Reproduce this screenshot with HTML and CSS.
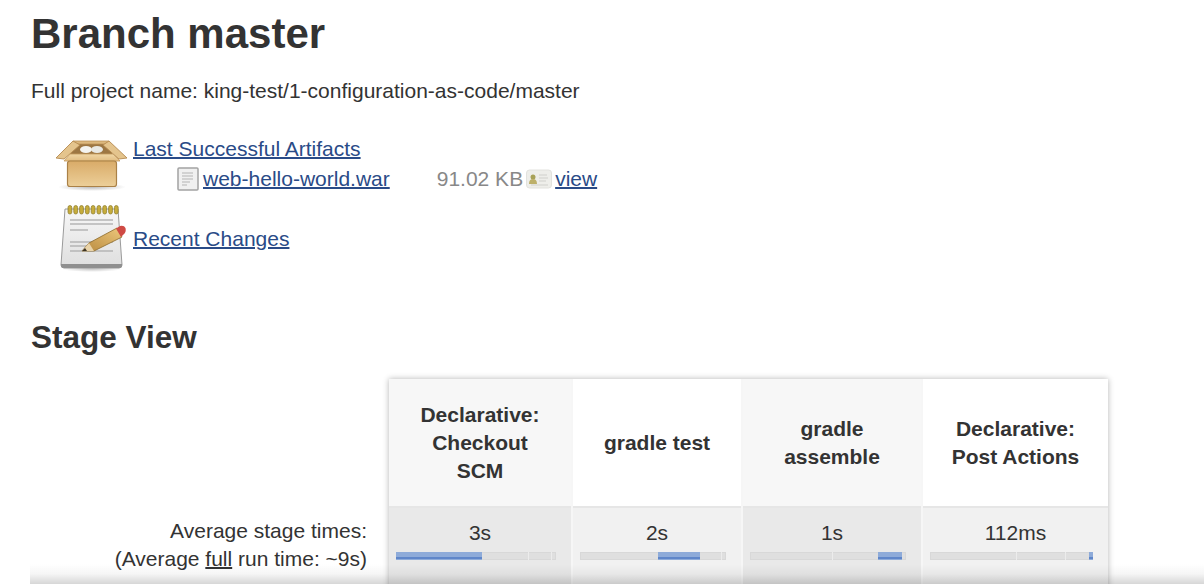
FILE: index.html
```html
<!DOCTYPE html>
<html lang="en">
<head>
    <meta charset="UTF-8">
    <meta name="viewport" content="width=device-width, initial-scale=1.0">
    <title>Branch master</title>
    <link rel="stylesheet" href="styles.css">
</head>
<body>
    <div class="main">
        <h1>Branch master</h1>
        <p class="full-name">Full project name: king-test/1-configuration-as-code/master</p>

        <div class="links">
            <div class="link-row artifacts">
                <svg class="big-icon" width="74" height="60" viewBox="0 0 74 60">
                    <defs>
                        <linearGradient id="boxFront" x1="0" y1="0" x2="0" y2="1">
                            <stop offset="0" stop-color="#d9ab68"/>
                            <stop offset="1" stop-color="#eccf99"/>
                        </linearGradient>
                        <linearGradient id="boxLid" x1="0" y1="0" x2="0" y2="1">
                            <stop offset="0" stop-color="#f0d7a6"/>
                            <stop offset="1" stop-color="#e2bd82"/>
                        </linearGradient>
                        <radialGradient id="boxShadow">
                            <stop offset="0" stop-color="#777" stop-opacity=".5"/>
                            <stop offset="1" stop-color="#777" stop-opacity="0"/>
                        </radialGradient>
                    </defs>
                    <ellipse cx="37" cy="53" rx="34" ry="4" fill="url(#boxShadow)"/>
                    <path d="M19 8 H53 L58 22 H14 Z" fill="#9d7743"/>
                    <ellipse cx="31" cy="15.500" rx="6" ry="3.500" fill="#f4f4f0"/>
                    <ellipse cx="42" cy="15.500" rx="6" ry="3.500" fill="#e9e9e4"/>
                    <path d="M18 7 H54 L51 10 H21 Z" fill="#dcb87e" stroke="#bd9257" stroke-width=".8"/>
                    <path d="M18 7 L25 11 L9 25 L1 24 Z" fill="#e4c48d" stroke="#b58a50" stroke-width=".9"/>
                    <path d="M54 7 L48 11 L64 25 L72 24 Z" fill="#e4c48d" stroke="#b58a50" stroke-width=".9"/>
                    <path d="M9 27 L15 20 H58 L65 27 Z" fill="url(#boxLid)" stroke="#c49a5e" stroke-width=".8"/>
                    <rect x="12.500" y="27" width="49" height="25.500" rx="2.500" fill="url(#boxFront)" stroke="#aa8147" stroke-width="1.200"/>
                </svg>
                <div class="artifact-text">
                    <a href="#">Last Successful Artifacts</a>
                    <div class="file-row">
                        <svg class="small-icon" width="22" height="24" viewBox="0 0 22 24">
                            <rect x="1" y="1" width="20" height="22" rx="1" fill="#f0f0f0" stroke="#a3a3a3" stroke-width="1.500"/>
                            <path d="M5 6 H16 M5 9 H16 M5 12 H16 M5 15 H13 M5 18 H10" stroke="#c8c8c8" stroke-width="1.300"/>
                        </svg>
                        <a class="file-name" href="#">web-hello-world.war</a>
                        <span class="file-size">91.02 KB</span>
                        <svg class="small-icon view-icon" width="26" height="20" viewBox="0 0 26 20">
                            <rect x="0.500" y="1" width="25" height="18" rx="3" fill="#eeeeea" stroke="#e2e2de"/>
                            <circle cx="7" cy="8" r="2.500" fill="#a8a258"/>
                            <path d="M3 15 Q3 10 7 10 Q11 10 11 15 Z" fill="#bdb06a"/>
                            <path d="M13 6 H21 M13 9 H22 M13 12 H20 M5 16 H22" stroke="#d0d0cb" stroke-width="1.200"/>
                        </svg>
                        <a href="#">view</a>
                    </div>
                </div>
            </div>
            <div class="link-row changes">
                <svg class="big-icon" width="74" height="68" viewBox="0 0 74 68">
                    <defs>
                        <linearGradient id="padPage" x1="0" y1="0" x2="0" y2="1">
                            <stop offset="0" stop-color="#f7f7f7"/>
                            <stop offset="1" stop-color="#dedede"/>
                        </linearGradient>
                        <linearGradient id="pencil" x1="0" y1="1" x2="1" y2="0">
                            <stop offset="0" stop-color="#b88a3e"/>
                            <stop offset="1" stop-color="#edc77c"/>
                        </linearGradient>
                        <radialGradient id="padShadow">
                            <stop offset="0" stop-color="#777" stop-opacity=".4"/>
                            <stop offset="1" stop-color="#777" stop-opacity="0"/>
                        </radialGradient>
                    </defs>
                    <ellipse cx="37" cy="65" rx="30" ry="3" fill="url(#padShadow)"/>
                    <path d="M10 5 H63 L67 61 Q67 64 64 64 H9 Q6 64 6 61 Z" fill="url(#padPage)" stroke="#9a9a9a" stroke-width="1"/>
                    <path d="M6 60 H67 V61 Q67 64 64 64 H9 Q6 64 6 61 Z" fill="#8f8f8f"/>
                    <g fill="#c7ad3c" stroke="#8a7a28" stroke-width=".7">
                        <rect x="13" y="1.500" width="3.800" height="8.500" rx="1.900"/>
                        <rect x="18.800" y="1.500" width="3.800" height="8.500" rx="1.900"/>
                        <rect x="24.600" y="1.500" width="3.800" height="8.500" rx="1.900"/>
                        <rect x="30.400" y="1.500" width="3.800" height="8.500" rx="1.900"/>
                        <rect x="36.200" y="1.500" width="3.800" height="8.500" rx="1.900"/>
                        <rect x="42" y="1.500" width="3.800" height="8.500" rx="1.900"/>
                        <rect x="47.800" y="1.500" width="3.800" height="8.500" rx="1.900"/>
                        <rect x="53.600" y="1.500" width="3.800" height="8.500" rx="1.900"/>
                        <rect x="59.400" y="1.500" width="3.800" height="8.500" rx="1.900"/>
                    </g>
                    <path d="M15 16 H58 M15 20 H58 M15 26 H33 M15 38 H58 M15 42 H46 M15 47 H58" stroke="#b5b5b5" stroke-width="1.300"/>
                    <path d="M27 47 L34 39 L62 24 L67 33 L39 47 Z" fill="url(#pencil)" stroke="#8c6a2a" stroke-width=".8"/>
                    <path d="M27 47 L34 39 L39 47 Z" fill="#e9d3a8"/>
                    <path d="M27 47 L30 44 L32 47 Z" fill="#3c3222"/>
                    <path d="M61 24.500 L65 22 Q69 21 70.500 24 Q71.500 28 68.500 30.500 L66 33 Z" fill="#cf4a44"/>
                </svg>
                <a class="changes-link" href="#">Recent Changes</a>
            </div>
        </div>

        <h2>Stage View</h2>

        <div class="stage-view">
            <div class="row-labels">
                <div class="label-spacer"></div>
                <div class="avg-label">
                    <div>Average stage times:</div>
                    <div>(Average <u>full</u> run time: ~9s)</div>
                </div>
            </div>
            <div class="stage-table">
                <div class="stage stage-odd stage-first">
                    <div class="stage-head">Declarative: Checkout SCM</div>
                    <div class="stage-avg">
                        <div class="time">3s</div>
                        <div class="bar">
                            <span class="fill" style="left: 0; width: 53.800%"></span>
                            <span class="tick" style="left: 82.500%"></span>
                            <span class="tick" style="left: 97%"></span>
                        </div>
                    </div>
                </div>
                <div class="stage stage-even">
                    <div class="stage-head">gradle test</div>
                    <div class="stage-avg">
                        <div class="time">2s</div>
                        <div class="bar">
                            <span class="fill" style="left: 53.400%; width: 28.800%"></span>
                            <span class="tick" style="left: 96.500%"></span>
                        </div>
                    </div>
                </div>
                <div class="stage stage-odd">
                    <div class="stage-head">gradle assemble</div>
                    <div class="stage-avg">
                        <div class="time">1s</div>
                        <div class="bar">
                            <span class="tick" style="left: 52.600%"></span>
                            <span class="fill" style="left: 82%; width: 15.400%"></span>
                        </div>
                    </div>
                </div>
                <div class="stage stage-even stage-last">
                    <div class="stage-head">Declarative: Post Actions</div>
                    <div class="stage-avg">
                        <div class="time">112ms</div>
                        <div class="bar">
                            <span class="tick" style="left: 53%"></span>
                            <span class="tick" style="left: 82.700%"></span>
                            <span class="fill" style="left: 97.500%; width: 2.500%"></span>
                        </div>
                    </div>
                </div>
            </div>
        </div>
    </div>
    <div class="bottom-shade"></div>
</body>
</html>
```
FILE: styles.css
```css
html, body{
    margin: 0;
    height: 584px;
    overflow: hidden;
    background-color: white;
}
body{
    font-family: "Liberation Sans", Arial, sans-serif;
    color: #333;
    font-size: 21px;
}
a{
    color: #2a4b87;
    text-decoration-thickness: 1.5px;
}
u{text-decoration-thickness: 1.5px;}
.main{padding: 11px 0 0 31px;}
h1{
    font-size: 42px;
    line-height: 46px;
    margin: 0;
}
.full-name{
    margin: 22px 0 0;
    line-height: 24px;
}

/* links with the big icons */
.links{margin-top: 31px;}
.link-row{display: flex; padding-left: 24px;}
.big-icon{flex: none; margin-right: 4px;}
.artifacts{height: 60px;}
.artifact-text{line-height: 30px;}
.file-row{
    display: flex;
    align-items: center;
    padding-left: 44px;
}
.small-icon{flex: none;}
.file-name{margin-left: 4px;}
.file-size{color: #888; margin-left: 47px; margin-right: 3px;}
.view-icon{margin-right: 3px;}
.changes{align-items: center; height: 68px; margin-top: 10px;}
.changes-link{margin-top: 2px;}

h2{
    font-size: 31.500px;
    line-height: 36px;
    margin: 47px 0 0;
}

/* stage table */
.stage-view{
    display: flex;
    margin-top: 24px;
}
.row-labels{width: 358px; flex: none;}
.label-spacer{height: 128px;}
.avg-label{
    text-align: right;
    padding: 10px 22px 0 0;
    line-height: 28px;
}
.stage-table{
    display: flex;
    width: 719px;
    height: 220px;
    box-shadow: 0 0 6px rgba(0, 0, 0, .3);
}
.stage{flex: none; border-right: 2px solid #f6f6f6; box-sizing: border-box;}
.stage-first{width: 184px;}
.stage:nth-child(2){width: 170px;}
.stage:nth-child(3){width: 180px;}
.stage-last{width: 185px; border-right: none;}
.stage-head{
    height: 129px;
    display: flex;
    align-items: center;
    justify-content: center;
    text-align: center;
    font-weight: bold;
    line-height: 28px;
    padding: 0 24px;
    box-sizing: border-box;
    border-bottom: 2px solid #e6e6e6;
}
.stage-odd .stage-head{background-color: #f7f7f7;}
.stage-even .stage-head{background-color: #fff;}
.stage-avg{height: 91px; padding-top: 11px; box-sizing: border-box;}
.stage-odd .stage-avg{background-color: #e9e9e9;}
.stage-even .stage-avg{background-color: #f1f1f1;}
.time{text-align: center; line-height: 28px;}
.bar{
    position: relative;
    height: 8px;
    margin: 5px 15px 0 7px;
    background-color: #dfdfdf;
    box-shadow: inset 0 0 0 1px #d8d8d8;
}
.fill{
    position: absolute;
    top: 0;
    bottom: 0;
    background: linear-gradient(#8eabd9 0 5px, #5f86c9 5px 7px, #8eabd9 7px);
}
.tick{
    position: absolute;
    top: 0;
    bottom: 0;
    width: 1px;
    background-color: #ececec;
}

/* shadow from the bar cut off at the bottom */
.bottom-shade{
    position: absolute;
    left: 30px;
    right: 0;
    top: 564px;
    height: 20px;
    background: linear-gradient(rgba(0, 0, 0, 0), rgba(0, 0, 0, .04) 50%, rgba(0, 0, 0, .16));
}
```
